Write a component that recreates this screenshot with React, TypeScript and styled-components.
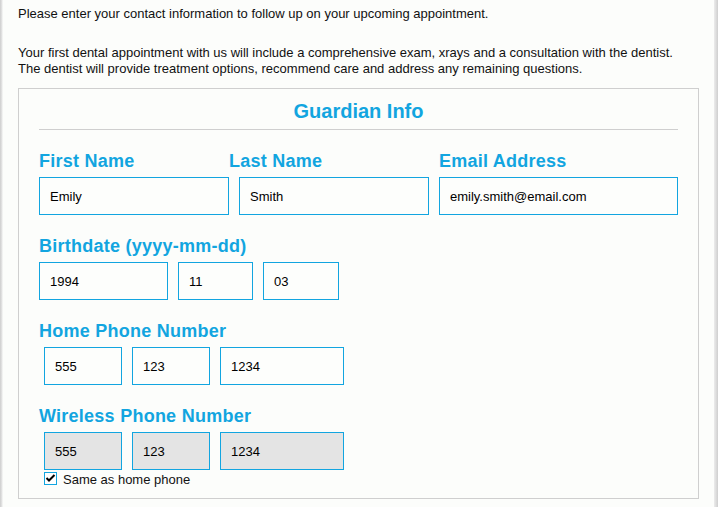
import React from 'react';
import styled, { createGlobalStyle } from 'styled-components';

const GlobalStyle = createGlobalStyle`
  html, body, #root {
    margin: 0;
    height: 100%;
  }
  body {
    font-family: "Liberation Sans", Arial, sans-serif;
    font-size: 13px;
    color: #111;
    background: #fcfdfb;
  }
`;

const BLUE = '#12a5e0';

const Page = styled.div`
  box-sizing: border-box;
  min-height: 100vh;
  padding: 6px 0 0 18px;
  background: linear-gradient(
    to right,
    #cdcdcd 0,
    #d9d9d9 1px,
    #e6e6e6 2px,
    #fcfdfb 3px,
    #fcfdfb calc(100% - 4px),
    #ececec calc(100% - 4px),
    #dddddd calc(100% - 2px),
    #cfcfcf 100%
  );
`;

const Intro = styled.p`
  margin: 0 0 23px;
  line-height: 16px;
`;

const Note = styled.p`
  margin: 0;
  line-height: 16px;
`;

const Panel = styled.div`
  box-sizing: border-box;
  width: 681px;
  margin-top: 11px;
  padding: 11px 20px 11px;
  border: 1px solid #cfcfcf;
`;

const Title = styled.h2`
  margin: 0;
  text-align: center;
  font-size: 20px;
  line-height: 22px;
  font-weight: bold;
  color: ${BLUE};
`;

const Rule = styled.hr`
  margin: 7px 0 0;
  border: 0;
  border-top: 1px solid #cfcfcf;
  height: 0;
`;

const NameGrid = styled.div`
  display: grid;
  grid-template-columns: 190px 190px 239px;
  column-gap: 10px;
  margin-top: 21px;
`;

const Field = styled.div`
  display: flex;
  flex-direction: column;
`;

const Group = styled.div`
  margin-top: 21px;
`;

const Label = styled.label<{ $shift?: number }>`
  display: block;
  margin: 0 0 6px ${(p) => p.$shift ?? 0}px;
  font-size: 18px;
  line-height: 20px;
  font-weight: bold;
  letter-spacing: 0.25px;
  color: ${BLUE};
  white-space: nowrap;
`;

const InputRow = styled.div<{ $indent?: number }>`
  display: flex;
  gap: 10px;
  padding-left: ${(p) => p.$indent ?? 0}px;
`;

const TextInput = styled.input<{ $width?: number; $locked?: boolean }>`
  box-sizing: border-box;
  width: ${(p) => (p.$width ? `${p.$width}px` : '100%')};
  height: 38px;
  margin: 0;
  padding: 0 10px;
  border: 1px solid ${BLUE};
  border-radius: 0;
  background: ${(p) => (p.$locked ? '#e4e4e4' : '#fdfefc')};
  font-family: "Liberation Sans", Arial, sans-serif;
  font-size: 13px;
  color: #000;
  outline: none;
`;

const CheckRow = styled.label`
  display: flex;
  align-items: flex-start;
  gap: 6px;
  margin: 2px 0 0 5px;
  cursor: pointer;
`;

const CheckBox = styled.span`
  box-sizing: border-box;
  display: inline-flex;
  width: 13px;
  height: 13px;
  border: 1px solid ${BLUE};
  background: #fff;
  flex: none;
`;

const CheckText = styled.span`
  padding-top: 1px;
  line-height: 14px;
  font-size: 13px;
`;

export default function App() {
  return (
    <>
      <GlobalStyle />
      <Page>
        <Intro>Please enter your contact information to follow up on your upcoming appointment.</Intro>
        <Note>
          Your first dental appointment with us will include a comprehensive exam, xrays and a consultation with the dentist.
          <br />
          The dentist will provide treatment options, recommend care and address any remaining questions.
        </Note>

        <Panel>
          <Title>Guardian Info</Title>
          <Rule />

          <NameGrid>
            <Field>
              <Label>First Name</Label>
              <TextInput defaultValue="Emily" />
            </Field>
            <Field>
              <Label $shift={-10}>Last Name</Label>
              <TextInput defaultValue="Smith" />
            </Field>
            <Field>
              <Label>Email Address</Label>
              <TextInput defaultValue="emily.smith@email.com" />
            </Field>
          </NameGrid>

          <Group>
            <Label>Birthdate (yyyy-mm-dd)</Label>
            <InputRow>
              <TextInput $width={129} defaultValue="1994" />
              <TextInput $width={75} defaultValue="11" />
              <TextInput $width={76} defaultValue="03" />
            </InputRow>
          </Group>

          <Group>
            <Label>Home Phone Number</Label>
            <InputRow $indent={5}>
              <TextInput $width={78} defaultValue="555" />
              <TextInput $width={78} defaultValue="123" />
              <TextInput $width={124} defaultValue="1234" />
            </InputRow>
          </Group>

          <Group>
            <Label>Wireless Phone Number</Label>
            <InputRow $indent={5}>
              <TextInput $width={78} $locked readOnly value="555" />
              <TextInput $width={78} $locked readOnly value="123" />
              <TextInput $width={124} $locked readOnly value="1234" />
            </InputRow>
            <CheckRow>
              <CheckBox>
                <svg width="11" height="11" viewBox="0 0 11 11">
                  <polyline points="1.5,5 4,7.5 9.5,2" fill="none" stroke="#000" strokeWidth="2" />
                </svg>
              </CheckBox>
              <CheckText>Same as home phone</CheckText>
            </CheckRow>
          </Group>
        </Panel>
      </Page>
    </>
  );
}
